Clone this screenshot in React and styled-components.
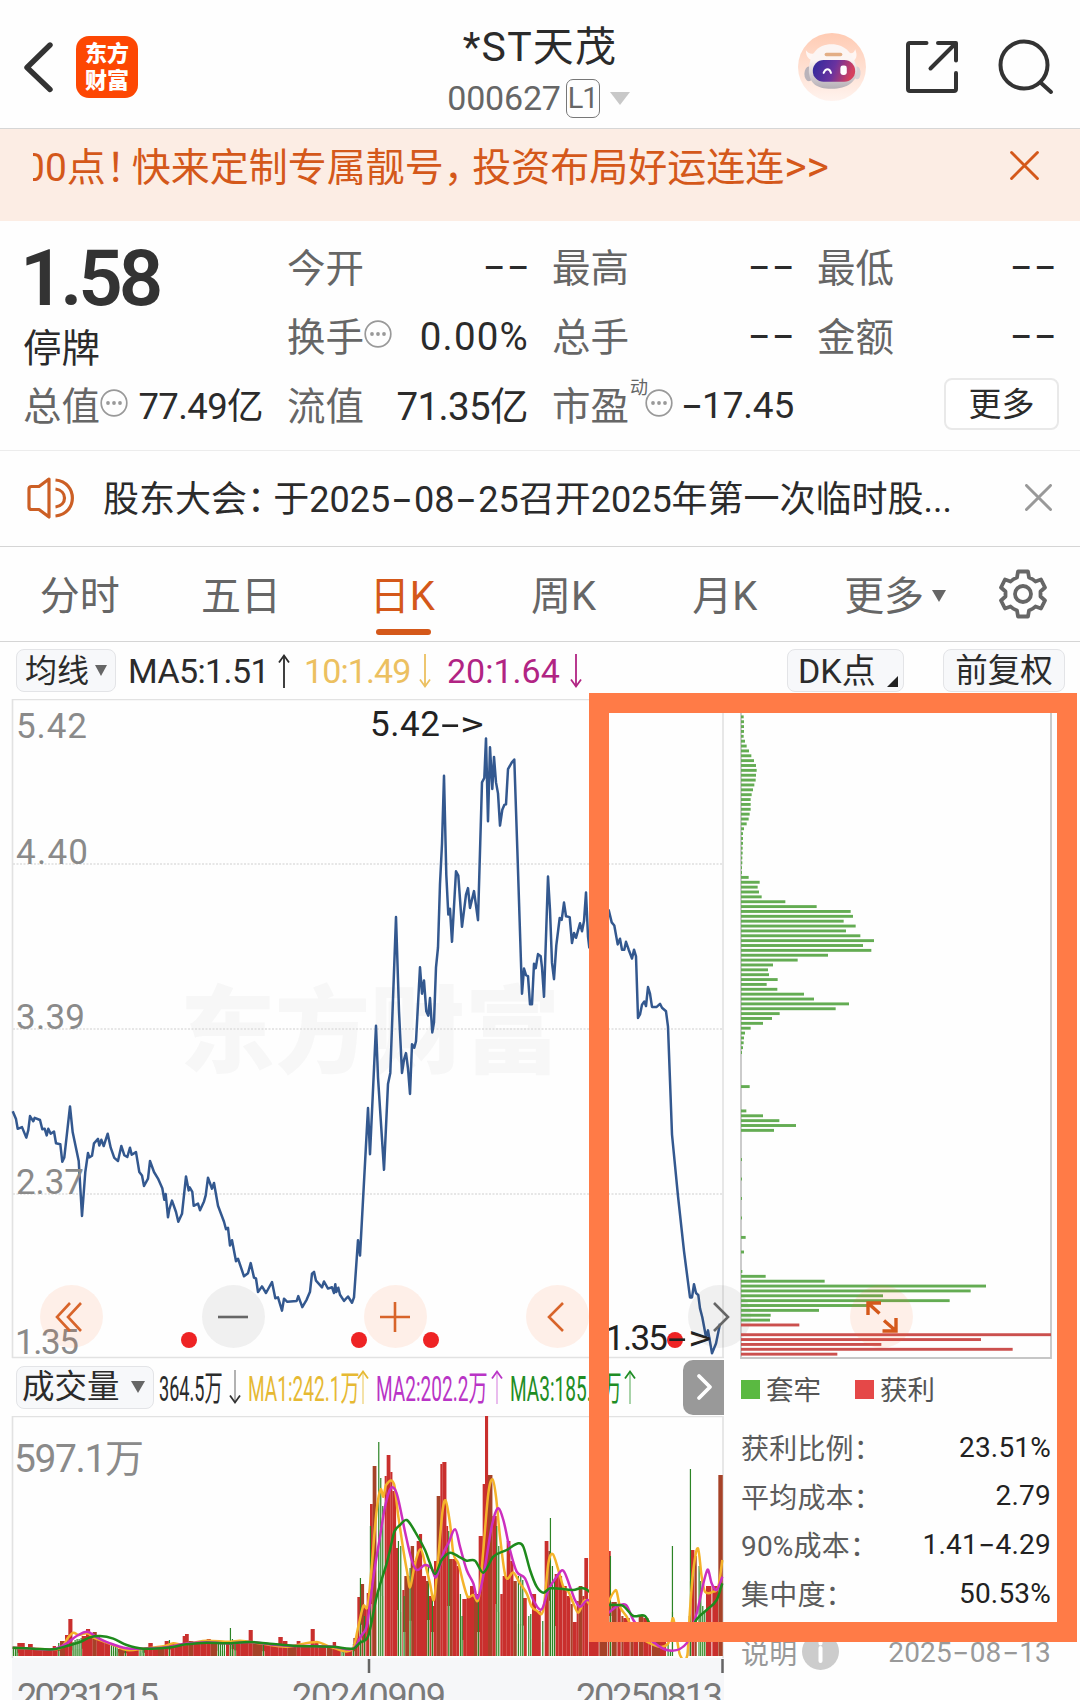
import React from 'react'
import styled, { createGlobalStyle, css } from 'styled-components'

const ORANGE = '#d4581a'
const GREY = '#666'
const DARK = '#2b2b2b'

const GlobalStyle = createGlobalStyle`
* {
    box-sizing: border-box;
}
body {
    margin : 0;
    background : #fff;
    font-family: Roboto, "Noto Sans CJK SC", sans-serif;
    color : ${DARK};
}
svg {
    display : block;
    flex : none;
}
`

const Page = styled.div`
position : relative;
width : 1080px;
height : 1700px;
overflow : hidden;
background : #fefefe;
white-space: nowrap;
`

/* ---------- header ---------- */

const Header = styled.header`
display : grid;
grid-template-columns: 1fr 200px 1fr;
height : 129px;
border-bottom: 1px solid #d6d6d6;
`

const HeaderLeft = styled.div`
display : flex;
align-items: center;
gap : 22px;
padding : 5px 0 0 23px;
`

const HeaderRight = styled.div`
display : flex;
align-items: center;
justify-content: flex-end;
gap : 39px;
padding : 5px 26px 0 0;
`

const Logo = styled.div`
display : flex;
flex-direction: column;
align-items: center;
justify-content: center;
width : 62px;
height : 62px;
border-radius: 13px;
background : #fd4703;
color : #fff;
font-size: 22px;
font-weight: 900;
line-height: 27px;
`

const Title = styled.div`
display : flex;
flex-direction: column;
align-items: center;
padding-top: 24px;
`

const StockName = styled.div`
height : 46px;
line-height: 46px;
font-size: 41px;
letter-spacing: 1.2px;
`

const StockCode = styled.div`
display : flex;
align-items: center;
height : 56px;
margin-left: -3px;
color : ${GREY};
font-size: 34px;
letter-spacing: -0.2px;
`

const LevelTag = styled.span`
width : 34px;
height : 39px;
margin : 0 10px 0 5px;
border : 1.5px solid #777;
border-radius: 7px;
text-align: center;
font-size: 29px;
line-height: 37px;
letter-spacing: -1px;
`

const Triangle = styled.i`
width : 0;
height : 0;
border-left: ${props => props.$w / 2}px solid transparent;
border-right: ${props => props.$w / 2}px solid transparent;
border-top: ${props => props.$h}px solid ${props => props.$color || GREY};
`

/* ---------- promo banner ---------- */

const Banner = styled.div`
display : flex;
justify-content: space-between;
height : 92px;
padding : 0 41px 0 33px;
background : #fcede4;
color : ${ORANGE};
`

const Marquee = styled.div`
display : flex;
justify-content: flex-end;
width : 796px;
height : 80px;
overflow : hidden;
font-size: 39px;
line-height: 79px;
`

const BannerClose = styled.div`
padding-top: 22px;
`

const Chevrons = styled.span`
font-size: 1.1em;
line-height: 1;
`

// full-width punctuation set tighter than one em
const Punct = styled.span`
letter-spacing: ${props => props.$ls || -0.27}em;
`

const Dash = styled.span`
display : inline-block;
width : ${props => props.$w || 0.63}em;
font-family: Inter;
text-align: center;
transform : scaleX(1.35);
`

/* ---------- quote ---------- */

const Quote = styled.section`
display : grid;
grid-template-columns: 239px 240px 240px 237px;
grid-template-rows: 69px 69px 69px;
column-gap: 25px;
height : 230px;
padding : 12px 0 0 24px;
border-bottom: 1px solid #ececec;
`

const PriceCell = styled.div`
grid-row: span 2;
`

const Price = styled.div`
height : 84px;
margin-left: -4px;
padding-top: 3px;
font-size: 78px;
font-weight: 600;
line-height: 86px;
letter-spacing: -4.2px;
color : #333;
`

const Status = styled.div`
margin-left: -1px;
font-size: 38.5px;
line-height: 64px;
`

const Cell = styled.div`
display : flex;
align-items: center;
height : 69px;
`

const Label = styled.span`
margin : -6px 0 0 -1px;
color : ${GREY};
font-size: 38.5px;
`

const Value = styled.span`
margin : ${props => props.$mt || 0}px ${props => props.$mr || 0}px 0 auto;
font-size: ${props => props.$size || 38.5}px;
letter-spacing: ${props => props.$ls || 0}px;
`

const Sup = styled.sup`
align-self: flex-start;
margin : 4px -3px 0 1px;
color : ${GREY};
font-size: 18px;
line-height: 26px;
`

const MoreButton = styled.button`
width : 115px;
height : 52px;
margin : -4px -4px 0 auto;
padding : 0;
border : 2px solid #e9e9e9;
border-radius: 8px;
background : #fff;
color : ${DARK};
font : 33px/49px Roboto, "Noto Sans CJK SC", sans-serif;
`

/* ---------- notice ---------- */

const Notice = styled.section`
display : flex;
align-items: center;
height : 96px;
padding : 0 28px 2px 27px;
border-bottom: 1px solid #d5d5d5;
`

const NoticeText = styled.div`
flex : 1;
margin : -3px 0 0 28px;
font-size: 36px;
`

/* ---------- tabs ---------- */

const Tabs = styled.nav`
display : flex;
height : 95px;
border-bottom: 1px solid #d5d5d5;
`

const Tab = styled.div`
display : flex;
flex-direction: column;
align-items: center;
width : 161.3px;
padding-top: 20px;
color : ${props => props.$active ? ORANGE : GREY};
font-size: 40px;
line-height: 60px;
text-indent: -2px;
${props => props.$active ? css`
&::after {
    content : '';
    width : 55px;
    height : 6px;
    margin-top: 2px;
    border-radius: 3px;
    background : ${ORANGE};
}
` : null}
`

const TabMore = styled.span`
display : flex;
align-items: center;
gap : 8px;
margin-left: 18px;

i {
    margin-top: -3px;
}
`

const Gear = styled.div`
margin-left: 31px;
padding-top: 22px;
`

/* ---------- indicator rows ---------- */

const Row = styled.div`
display : flex;
align-items: center;
height : ${props => props.$h}px;
padding-left: 16px;
`

const Chip = styled.div`
display : flex;
flex : none;
align-items: center;
justify-content: ${props => props.$center ? 'center' : 'space-between'};
width : ${props => props.$w}px;
height : 43px;
margin-left: ${props => props.$ml || 0}px;
padding : 0 8px 0 ${props => props.$pl || 8}px;
border : 1.5px solid #e3e4e7;
border-radius: 8px;
background : #f7f8fa;
font-size: ${props => props.$size || 32}px;
line-height: 38px;
`

const Corner = styled.i`
align-self: flex-end;
width : 0;
height : 0;
margin : 0 -3px 4px 0;
border-left: 11px solid transparent;
border-bottom: 11px solid #222;
`

const Average = styled.span`
display : flex;
align-items: center;
flex : none;
width : ${props => props.$w}px;
padding-left: ${props => props.$pl || 0}px;
color : ${props => props.$color};
font-size: 34px;
letter-spacing: ${props => props.$ls || 0}px;
`

const Squeezed = styled.span`
flex : none;
width : ${props => props.$w}px;
padding : 3px 0 0 ${props => props.$pl || 6}px;
color : ${props => props.$color};
font-size: 35.5px;
line-height: 44px;

span {
    display : inline-block;
    transform : scaleX(${props => props.$scale || 0.537});
    transform-origin: 0 50%;
}
`

/* ---------- chart area ---------- */

const Main = styled.main`
display : flex;
`

const Left = styled.div`
width : 724px;
`

const ChartBox = styled.div`
position : relative;
height : ${props => props.$h}px;
`

const Controls = styled.div`
position : absolute;
left : 40px;
bottom : 10px;
display : flex;
gap : 98.9px;
`

const Round = styled.div`
display : flex;
flex : none;
align-items: center;
justify-content: center;
width : 63px;
height : 63px;
border-radius: 50%;
background : ${props => props.$grey ? 'rgba(60, 60, 60, 0.07)' : 'rgba(255, 110, 40, 0.1)'};
`

const Expand = styled(Round)`
position : absolute;
left : 110px;
bottom : 11px;
`

const NextButton = styled.div`
display : flex;
align-items: center;
justify-content: center;
width : 41px;
height : 55px;
margin-left: auto;
border-radius: 10px 0 0 10px;
background : #999;
`

const Side = styled.aside`
width : 311px;
margin-left: 16px;
`

const Legend = styled.div`
display : flex;
align-items: center;
height : 58px;
padding : 0 0 0 1px;
color : #555;
font-size: 27.5px;
`

const Swatch = styled.i`
width : 19px;
height : 19px;
margin : 3px 6px 0 ${props => props.$ml || 0}px;
background : ${props => props.$color};
`

const Stat = styled.div`
display : flex;
align-items: center;
justify-content: space-between;
height : 48.6px;
padding-left: 1px;
color : ${props => props.$muted ? '#999' : '#222'};
font-size: 28px;
letter-spacing: 0.2px;
`

const StatName = styled.span`
display : flex;
align-items: center;
gap : 5px;
color : ${props => props.$muted ? '#999' : '#5c5c5c'};
`

const Stats = styled.div`
padding-top: 6px;

${Stat}:last-child {
    margin-top: 10px;
}
`

const Highlight = styled.div`
position : absolute;
left : 589px;
top : 693px;
width : 488px;
height : 949px;
border : 20px solid #ff7b47;
pointer-events: none;
`

/* ---------- data, in thirds of a pixel across ---------- */

const pricePoints = [
    38, 957, 48, 975, 53, 997, 66, 993, 79, 1017, 85, 1000, 90, 968, 100, 980, 104, 972, 120, 977, 127, 998, 134, 997,
    140, 1012, 145, 997, 152, 1008, 162, 1003, 168, 1030, 181, 1032, 187, 1072, 193, 1062, 210, 946, 218, 1005,
    236, 1070, 246, 1195, 256, 1095, 264, 1052, 268, 1062, 276, 1058, 282, 1030, 294, 1020, 298, 1035, 304, 1022,
    311, 1036, 323, 1008, 332, 1040, 343, 1063, 354, 1070, 364, 1036, 373, 1057, 382, 1061, 390, 1040, 395, 1056,
    408, 1050, 418, 1095, 426, 1103, 432, 1127, 444, 1110, 450, 1070, 462, 1095, 474, 1110, 487, 1132, 493, 1158,
    497, 1145, 504, 1198, 508, 1180, 516, 1160, 528, 1186, 535, 1208, 546, 1190, 558, 1105, 566, 1137, 569, 1130,
    577, 1140, 581, 1172, 594, 1167, 600, 1182, 612, 1162, 617, 1148, 624, 1108, 636, 1133, 642, 1120, 654, 1172,
    672, 1208, 678, 1225, 684, 1222, 690, 1262, 696, 1250, 708, 1298, 714, 1292, 732, 1332, 744, 1325, 752, 1302,
    762, 1335, 768, 1337, 774, 1368, 786, 1355, 798, 1370, 816, 1345, 826, 1382, 834, 1380, 846, 1410, 852, 1383,
    862, 1390, 890, 1388, 895, 1377, 907, 1402, 920, 1385, 930, 1367, 936, 1326, 942, 1322, 948, 1342, 966, 1357,
    972, 1344, 984, 1360, 996, 1357, 1002, 1370, 1006, 1350, 1009, 1368, 1015, 1358, 1020, 1374, 1032, 1388,
    1044, 1378, 1056, 1392, 1062, 1380, 1074, 1250, 1080, 1285, 1104, 950, 1110, 1055, 1128, 763, 1134, 880,
    1152, 1090, 1164, 895, 1171, 870, 1188, 516, 1197, 730, 1206, 870, 1212, 840, 1218, 825, 1224, 860, 1230, 918,
    1236, 805, 1243, 813, 1248, 798, 1260, 630, 1266, 690, 1272, 660, 1279, 730, 1285, 740, 1290, 700, 1297, 778,
    1302, 755, 1308, 630, 1314, 585, 1320, 440, 1326, 350, 1332, 195, 1339, 420, 1345, 510, 1350, 497, 1356, 572,
    1368, 412, 1375, 422, 1386, 538, 1398, 465, 1404, 450, 1410, 495, 1422, 457, 1434, 523, 1446, 210, 1453, 200,
    1458, 110, 1464, 298, 1470, 130, 1477, 225, 1482, 152, 1488, 210, 1494, 235, 1500, 308, 1507, 272, 1513, 261,
    1518, 260, 1524, 180, 1535, 165, 1543, 158, 1552, 360, 1566, 690, 1572, 633, 1578, 648, 1584, 650, 1590, 714,
    1596, 714, 1602, 622, 1607, 632, 1614, 600, 1622, 605, 1626, 630, 1632, 697, 1644, 424, 1650, 500, 1656, 620,
    1662, 657, 1669, 580, 1679, 518, 1685, 522, 1692, 483, 1698, 514, 1709, 516, 1716, 575, 1722, 552, 1728, 563,
    1740, 530, 1746, 548, 1752, 525, 1758, 460, 1764, 560, 1768, 585, 1790, 530, 1826, 500, 1835, 528, 1843, 535,
    1853, 578, 1860, 565, 1866, 590, 1873, 590, 1878, 572, 1886, 590, 1896, 610, 1902, 590, 1908, 605, 1914, 745,
    1920, 737, 1926, 715, 1933, 708, 1938, 718, 1944, 675, 1950, 690, 1956, 720, 1970, 720, 1980, 713, 1986, 722,
    1998, 730, 2004, 765, 2016, 1010, 2034, 1150, 2052, 1275, 2070, 1380, 2076, 1380, 2082, 1350, 2088, 1370,
    2095, 1375, 2100, 1405, 2107, 1425, 2118, 1470, 2124, 1455, 2136, 1507, 2148, 1485, 2160, 1440,
]

// start, end, height
const volumeBars = [
    52, 74, 13, 74, 84, 7, 84, 98, 12, 98, 128, 7, 128, 158, 7, 158, 168, 10, 168, 180, 9, 180, 195, 15, 195, 205, 21,
    205, 217, 37, 245, 258, 20, 258, 270, 27, 270, 278, 22, 278, 290, 24, 290, 300, 19, 300, 314, 16, 314, 330, 14,
    354, 376, 7, 378, 396, 7, 396, 416, 7, 432, 445, 8, 445, 458, 13, 458, 474, 7, 474, 494, 8, 494, 506, 15,
    506, 524, 13, 524, 548, 12, 548, 555, 20, 555, 566, 22, 566, 580, 15, 580, 602, 13, 602, 620, 13, 620, 632, 17,
    632, 652, 12, 678, 704, 12, 706, 722, 12, 722, 746, 13, 746, 758, 26, 758, 788, 13, 788, 812, 11, 812, 835, 11,
    835, 848, 19, 848, 862, 15, 862, 890, 10, 890, 901, 15, 901, 932, 10, 932, 944, 27, 944, 955, 14, 955, 978, 10,
    980, 998, 10, 998, 1008, 14, 1008, 1022, 8, 1034, 1058, 7, 1060, 1072, 18, 1072, 1082, 59, 1082, 1092, 72,
    1092, 1100, 50, 1100, 1108, 63, 1110, 1118, 152, 1118, 1129, 190, 1154, 1160, 180, 1160, 1171, 201,
    1171, 1177, 184, 1177, 1188, 165, 1188, 1195, 108, 1207, 1213, 66, 1213, 1228, 80, 1232, 1242, 110,
    1242, 1250, 95, 1250, 1257, 115, 1257, 1266, 122, 1266, 1278, 80, 1278, 1285, 75, 1285, 1296, 60, 1296, 1302, 50,
    1302, 1310, 95, 1310, 1321, 160, 1321, 1327, 192, 1327, 1339, 194, 1339, 1344, 130, 1347, 1358, 97,
    1358, 1370, 97, 1370, 1377, 90, 1387, 1400, 57, 1400, 1410, 60, 1410, 1422, 70, 1422, 1434, 62, 1436, 1448, 120,
    1448, 1455, 172, 1455, 1464, 240, 1464, 1477, 181, 1477, 1490, 140, 1501, 1508, 62, 1508, 1520, 80,
    1520, 1531, 115, 1531, 1540, 95, 1540, 1550, 75, 1569, 1580, 58, 1596, 1608, 62, 1608, 1622, 45, 1634, 1645, 115,
    1645, 1650, 105, 1664, 1675, 82, 1675, 1686, 80, 1687, 1700, 70, 1700, 1711, 60, 1712, 1718, 52, 1718, 1730, 34,
    1730, 1736, 55, 1736, 1747, 70, 1747, 1753, 60, 1753, 1764, 98, 1766, 1796, 55, 1798, 1822, 55, 1824, 1832, 105,
    1834, 1850, 54, 1852, 1862, 50, 1864, 1870, 40, 1870, 1889, 38, 1891, 1900, 28, 1900, 1914, 25, 1916, 1930, 40,
    1930, 1945, 38, 1945, 1953, 20, 1955, 1980, 18, 1980, 1998, 14, 2066, 2070, 40, 2071, 2083, 106, 2084, 2090, 100,
    2118, 2134, 70, 2137, 2154, 70, 2155, 2168, 181,
]
const brownBars = [7, 13, 17, 23, 29, 33, 38, 43, 49, 53, 55, 59, 66, 67, 72, 76, 80, 86, 90, 96, 101, 106, 109, 113, 115, 117, 119, 121, 124, 126, 128, 131, 133, 135]

const greenLines = [
    40, 9, 46, 9, 51, 8, 176, 13, 219, 14, 225, 16, 231, 17, 237, 17, 243, 18, 334, 12, 340, 12, 346, 11, 351, 9,
    376, 7, 420, 7, 426, 7, 431, 8, 508, 16, 655, 13, 661, 13, 667, 12, 673, 12, 691, 28, 697, 17, 705, 14, 790, 12,
    1026, 8, 1031, 8, 1060, 12, 1081, 78, 1093, 40, 1111, 130, 1136, 214, 1142, 178, 1148, 150, 1195, 115, 1202, 110, 1212, 60, 1230, 88,
    1285, 90, 1297, 60, 1346, 125, 1381, 62, 1386, 40, 1435, 60, 1490, 130, 1496, 110, 1555, 80, 1562, 80, 1568, 76, 1586, 40,
    1592, 42, 1628, 35, 1651, 138, 1657, 90, 1663, 75, 1831, 100, 2004, 16, 2011, 6, 2017, 110, 2071, 187, 2097, 90,
    2102, 75, 2108, 50, 2114, 45,
]

const maYellow = [
    38, 893, 100, 896, 160, 898, 185, 892, 205, 862, 220, 848, 235, 855, 262, 850, 280, 862, 300, 870, 340, 885, 380, 900,
    430, 896, 495, 888, 520, 880, 545, 884, 580, 878, 620, 872, 690, 875, 720, 872, 780, 880, 860, 890, 950, 876,
    990, 890, 1058, 898, 1075, 830, 1090, 768, 1103, 768, 1115, 650, 1130, 480, 1142, 418, 1150, 440, 1158, 405,
    1182, 402, 1195, 500, 1210, 600, 1222, 670, 1230, 712, 1245, 640, 1262, 598, 1275, 640, 1290, 700, 1302, 748,
    1315, 620, 1328, 480, 1337, 452, 1350, 520, 1360, 610, 1375, 640, 1390, 700, 1403, 740, 1420, 735, 1436, 745,
    1450, 600, 1465, 430, 1478, 388, 1488, 440, 1500, 560, 1517, 680, 1540, 668, 1560, 700, 1580, 730, 1595, 770,
    1610, 782, 1630, 780, 1645, 640, 1658, 612, 1675, 660, 1690, 710, 1705, 725, 1720, 760, 1735, 788, 1755, 750,
    1800, 800, 1847, 720, 1860, 770, 1880, 800, 1900, 840, 1950, 880, 2005, 880, 2018, 805, 2028, 850, 2040, 915,
    2062, 915, 2070, 780, 2080, 660, 2094, 595, 2105, 680, 2115, 725, 2140, 725, 2155, 710, 2167, 630,
]
const maPurple = [
    38, 893, 100, 896, 160, 898, 200, 880, 230, 858, 262, 845, 290, 862, 330, 880, 380, 895, 430, 896, 500, 892, 550, 882,
    620, 877, 680, 880, 750, 876, 820, 884, 880, 888, 940, 888, 1000, 890, 1060, 896, 1085, 855, 1100, 830, 1110, 760,
    1125, 650, 1140, 560, 1155, 470, 1172, 415, 1190, 430, 1215, 545, 1235, 630, 1250, 660, 1275, 645, 1295, 655,
    1308, 682, 1330, 610, 1345, 580, 1366, 538, 1380, 590, 1400, 660, 1420, 700, 1433, 745, 1455, 650, 1475, 530,
    1493, 475, 1510, 510, 1530, 600, 1550, 665, 1575, 685, 1600, 750, 1625, 778, 1645, 720, 1670, 680, 1690, 662,
    1710, 710, 1725, 750, 1740, 770, 1765, 750, 1800, 800, 1850, 770, 1878, 765, 1900, 810, 1930, 850, 2000, 900,
    2060, 880, 2090, 790, 2122, 660, 2135, 700, 2150, 720, 2167, 680,
]
const maGreen = [
    38, 893, 100, 896, 160, 898, 200, 888, 240, 876, 270, 862, 300, 858, 340, 866, 380, 885, 430, 896, 500, 893, 560, 883,
    620, 878, 680, 880, 750, 876, 820, 882, 880, 887, 940, 889, 1000, 890, 1060, 896, 1080, 878, 1105, 857, 1130, 740,
    1160, 640, 1170, 600, 1183, 545, 1200, 525, 1220, 510, 1245, 545, 1275, 600, 1290, 640, 1305, 672, 1325, 630,
    1350, 608, 1380, 622, 1400, 632, 1425, 632, 1450, 668, 1480, 620, 1520, 600, 1555, 580, 1570, 590, 1590, 660,
    1610, 710, 1630, 728, 1650, 715, 1720, 720, 1745, 714, 1765, 722, 1800, 760, 1850, 765, 1870, 768, 1900, 798,
    1935, 798, 1960, 840, 2020, 870, 2070, 850, 2090, 808, 2120, 780, 2150, 750, 2167, 700,
]

const zeros = n => Array(n).fill(0)
const chips = [
    8, 9, 9, 9, 8, 12, 17, 24, 31, 39, 45, 47, 45, 44, 40, 36, 32, 29, 29, 29, 26, 23, 17, 9, 6, 6, 6, 5, 5, 4, 4, 3, 3,
    23, 56, 50, 54, 62, 133, 227, 329, 336, 308, 344, 315, 358, 399, 366, 391, 261, 170, 96, 81, 84, 110, 77, 109, 189,
    219, 324, 284, 116, 93, 66, 29, 12, 9, 8, 6, 3, ...zeros(6), 26, ...zeros(4), 16, 66, 115, 165, 99, ...zeros(5), 3,
    ...zeros(3), 3, ...zeros(3), 3, ...zeros(3), 3, ...zeros(3), 14, 0, 0, 9, ...zeros(3), 4, 74, 251, 735, 689, 426,
    626, 380, 234, 89, 87, 175, 0, 930, 720, 421, 815, 289,
]
const FIRST_PROFIT = 125

const pairs = list => list.reduce((out, v, i) => (i % 2 ? out : [...out, [v, list[i + 1]]]), [])
const priceLine = pairs(pricePoints).map(([x, y]) => `${(x / 3).toFixed(1)},${(y / 2.272 - 9).toFixed(1)}`).join(' ')

// smooth curve through the moving-average points
const maLine = list => {
    const p = pairs(list).map(([x, y]) => [x / 3, (y - 198) / 3])
    let d = `M${p[0]}`
    for (let i = 0; i < p.length - 1; i++) {
        const a = p[i - 1] || p[i]
        const b = p[i]
        const c = p[i + 1]
        const e = p[i + 2] || c
        const k = (c[0] - b[0]) / 3
        const s1 = i > 0 ? (c[1] - a[1]) / (c[0] - a[0]) : 0
        const s2 = (e[1] - b[1]) / (e[0] - b[0])
        d += `C${b[0] + k} ${b[1] + s1 * k} ${c[0] - k} ${c[1] - s2 * k} ${c[0]} ${c[1]}`
    }
    return d
}

/* ---------- icons ---------- */

const Cross = ({ size, color, width }) => (
    <svg width={size} height={size} viewBox="0 0 28 28" fill="none" stroke={color} strokeWidth={width} strokeLinecap="round">
        <path d="M1.5 1.5 26.5 26.5M26.5 1.5 1.5 26.5" />
    </svg>
)

const DotsIcon = styled.svg`
margin-top: -6px;
`

const Dots = () => (
    <DotsIcon width="28" height="30" viewBox="0 0 28 30">
        <circle cx="14" cy="15" r="12.8" fill="none" stroke="#999" strokeWidth="1.7" />
        <g fill="#999"><circle cx="8" cy="15" r="1.9" /><circle cx="14" cy="15" r="1.9" /><circle cx="20" cy="15" r="1.9" /></g>
    </DotsIcon>
)

const ArrowIcon = styled.svg`
margin-left: ${props => props.$ml}px;
`

const Arrow = ({ down, color, shaft, ml }) => (
    <ArrowIcon $ml={ml} width="14" height="36" viewBox="0 0 14 36" fill="none" stroke={color} strokeWidth="1.8">
        <g transform={down ? 'rotate(180 7 18)' : undefined}>
            <path d="M7 3V35" stroke={shaft || color} />
            <path d="M2 9.5 7 2.5 12 9.5" />
        </g>
    </ArrowIcon>
)

const Robot = () => (
    <svg width="68" height="70" viewBox="0 0 69 70">
        <defs>
            <linearGradient id="halo" x1="0" y1="0" x2="0" y2="1">
                <stop offset="0" stopColor="#ffcbb3" /><stop offset="1" stopColor="#fff3ee" />
            </linearGradient>
            <linearGradient id="visor" x1="0" y1="0" x2="1" y2="0.2">
                <stop offset="0" stopColor="#2d2a9c" /><stop offset="0.55" stopColor="#69329f" /><stop offset="1" stopColor="#d5405e" />
            </linearGradient>
            <linearGradient id="shell" x1="0" y1="0" x2="0" y2="1">
                <stop offset="0.35" stopColor="#fcf5f3" /><stop offset="1" stopColor="#b5afb6" />
            </linearGradient>
        </defs>
        <circle cx="34.5" cy="35" r="34.5" fill="url(#halo)" />
        <path d="M8 18C8 25 12 29 17 28L20 20C14 23 10 21 8 18ZM58 17C61 24 59 28 54 30L50 20C54 22 57 21 58 17Z" fill="#fff6f3" />
        <ellipse cx="11" cy="42" rx="4.5" ry="7.5" fill="#b9b3ba" />
        <ellipse cx="60" cy="41" rx="3.5" ry="6.500" fill="#d9d2d6" />
        <path d="M11 40C11 22 20 12 34 12S57 22 60 38C60 50 50 57 34 57S12 51 11 40Z" fill="url(#shell)" />
        <rect x="27" y="20.5" width="18" height="3.5" rx="1.8" fill="#e3ae85" />
        <rect x="15" y="28" width="43" height="22" rx="11" fill="url(#visor)" />
        <path d="M26 41C28 36 32 36 33.5 41" fill="none" stroke="#fff" strokeWidth="2" strokeLinecap="round" />
        <rect x="43" y="33.5" width="6.5" height="9.500" rx="2.5" fill="#fff" />
    </svg>
)

const ShareIcon = () => (
    <svg width="54" height="54" viewBox="0 0 54 54" fill="none" stroke="#333" strokeWidth="4" strokeLinecap="round" strokeLinejoin="round">
        <path d="M21.5 3H5Q3 3 3 5V49Q3 51 5 51H49Q51 51 51 49V33" />
        <path d="M33 3H51V20.5M50 4 25.5 28.5" />
    </svg>
)

const SearchIcon = () => (
    <svg width="56" height="56" viewBox="0 0 56 56" fill="none" stroke="#333" strokeWidth="4" strokeLinecap="round">
        <circle cx="26" cy="26" r="23.5" />
        <path d="M42.5 43.500 53 53" />
    </svg>
)

const Speaker = () => (
    <svg width="48" height="42" viewBox="0 0 48 42" fill="none" stroke="#cc5f25" strokeWidth="3.2" strokeLinejoin="round">
        <path d="M12 9.5H4.5Q2 9.500 2 12V30Q2 32.5 4.5 32.5H12L22 40V2Z" />
        <path d="M28.5 3C51 5 51 37 28.5 39" />
        <path d="M28.5 12C40.5 13.5 40.5 28.5 28.5 30" />
    </svg>
)

const GearIcon = () => (
    <svg width="48" height="50" viewBox="0 0 48 50" fill="none" stroke={GREY} strokeWidth="3.8" strokeLinejoin="round">
        <path d="M19 2.5H29L30 8.5Q34 10 36.5 12.5L42 10.5L46 18.5L41.5 22.5V27.5L46 31.5L42 39.5L36.5 37.5Q34 40 30 41.5L29 47.5H19L18 41.5Q14 40 11.5 37.5L6 39.5L2 31.5L6.5 27.5V22.5L2 18.5L6 10.5L11.5 12.5Q14 10 18 8.5Z" />
        <circle cx="24" cy="25" r="8" />
    </svg>
)

const Stroke = ({ d, color, width = 2.6 }) => (
    <svg width="36" height="36" viewBox="0 0 36 36" fill="none" stroke={color} strokeWidth={width}>
        <path d={d} />
    </svg>
)

/* ---------- charts ---------- */

const PriceChart = () => (
    <svg width="724" height="660" viewBox="0 0 724 660" fontFamily="Roboto" fontSize="35">
        <text x="180" y="367" fontFamily="Noto Sans CJK SC" fontWeight="900" fontSize="95" fill="#f7f7f7">东方财富</text>
        <path d="M12.5 659V0.5H723V659" fill="none" stroke="#e2e2e2" strokeWidth="1.6" />
        <path d="M12 658.5H724" stroke="#e2e2e2" strokeWidth="1.6" />
        {[165, 330, 495].map(y => (
            <path key={y} d={`M13 ${y}H722`} stroke="#dedede" strokeWidth="1.3" strokeDasharray="2 1.5" />
        ))}
        <polyline points={priceLine} fill="none" stroke="#33588f" strokeWidth="2.5" strokeLinejoin="round" />
        <g fill="#8a8a8a">
            <text x="16" y="39" textLength="71">5.42</text>
            <text x="16" y="165" textLength="72">4.40</text>
            <text x="16" y="330" textLength="69">3.39</text>
            <text x="16" y="495" textLength="68">2.37</text>
            <text x="15" y="655" textLength="64">1.35</text>
        </g>
        {[189, 359, 431, 675].map(x => <circle key={x} cx={x} cy="641" r="8" fill="#ee2324" />)}
        <g fill="#222">
            <text x="370" y="37" textLength="70">5.42</text>
            <text x="605" y="651" textLength="63">1.35</text>
            <text transform="translate(441 37) scale(1.9 1)">-</text>
            <text transform="translate(460 37) scale(1.3 1)">&gt;</text>
            <text transform="translate(668 651) scale(1.9 1)">-</text>
            <text transform="translate(688 651) scale(1.3 1)">&gt;</text>
        </g>
    </svg>
)

const ChipChart = () => (
    <svg width="312" height="660" viewBox="0 0 312 660">
        <path d="M1 0V659H311V0" fill="none" stroke="#c6c6c6" strokeWidth="1.8" />
        {chips.map((w, i) => w > 0 && (
            <rect key={i} x="1" y={16.4 + i * 4.865} width={w / 3} height="2.9" fill={i < FIRST_PROFIT ? '#64ac53' : '#cb504e'} />
        ))}
    </svg>
)

const VolumeChart = () => {
    const bars = []
    for (let i = 0; i < volumeBars.length; i += 3) {
        bars.push(volumeBars.slice(i, i + 3))
    }
    return (
        <svg width="724" height="242" viewBox="0 0 724 242">
            <path d="M12.5 242V0.5H723V242" fill="none" stroke="#e2e2e2" strokeWidth="1.6" />
            {bars.map(([from, to, h], i) => (
                <rect key={i} x={from / 3} y={240 - h} width={(to - from) / 3 + 0.1} height={h} fill={brownBars.includes(i) ? '#a64228' : '#c92f2d'} />
            ))}
            {pairs(greenLines).map(([x, h]) => (
                <g key={x}>
                    <rect x={x / 3 - 1} y={240 - h * 0.4} width="2.2" height={h * 0.4} fill="#e9f3dc" />
                    <rect x={x / 3 - 0.5} y={240 - h} width="1.2" height={h} fill="#2c8425" />
                </g>
            ))}
            <g fill="none" strokeWidth="2.5" strokeLinejoin="round">
                <path d={maLine(maYellow)} stroke="#f4b32a" />
                <path d={maLine(maPurple)} stroke="#cc2fbf" />
                <path d={maLine(maGreen)} stroke="#1e8a1c" />
            </g>
            <text x="14" y="56" fontFamily="Roboto, Noto Sans CJK SC" fontSize="39" fill="#8a8a8a" textLength="130">597.1万</text>
        </svg>
    )
}

const DateAxis = () => (
    <svg width="724" height="42" viewBox="0 0 724 42" fontFamily="Roboto" fontSize="36" fill="#7a7a7a">
        <rect x="12" width="712" height="42" fill="#f6f7f9" />
        <path d="M369 1V15M722.5 1V15" stroke="#666" strokeWidth="2.5" />
        <text x="17" y="51" textLength="142">20231215</text>
        <text x="292" y="51" textLength="154">20240909</text>
        <text x="576" y="51" textLength="147">20250813</text>
    </svg>
)

const withDashes = (text, w) => text.split(/(-)/).map((part, i) => (part === '-' ? <Dash key={i} $w={w}>-</Dash> : part))

const quotes = [
    ['今开', '--'], ['最高', '--'], ['最低', '--'],
    ['换手', '0.00%', true], ['总手', '--'], ['金额', '--'],
]

const stats = [
    ['获利比例', '23.51%'],
    ['平均成本', '2.79'],
    ['90%成本', '1.41-4.29'],
    ['集中度', '50.53%'],
]

const App = () => {
    return (
        <>
            <GlobalStyle />
            <Page>
                <Header>
                    <HeaderLeft>
                        <svg width="31" height="52" viewBox="0 0 31 52" fill="none" stroke="#333" strokeWidth="5.4" strokeLinecap="round" strokeLinejoin="round">
                            <path d="M27 4 4 26.5 27 48.5" />
                        </svg>
                        <Logo><span>东方</span><span>财富</span></Logo>
                    </HeaderLeft>
                    <Title>
                        <StockName>*ST天茂</StockName>
                        <StockCode>
                            000627<LevelTag>L1</LevelTag><Triangle $w={20} $h={13} $color="#c8c8c8" />
                        </StockCode>
                    </Title>
                    <HeaderRight>
                        <Robot />
                        <ShareIcon />
                        <SearchIcon />
                    </HeaderRight>
                </Header>

                <Banner>
                    <Marquee>
                        <span>00点<Punct $ls={-0.34}>！</Punct>快来定制专属靓号<Punct>，</Punct>投资布局好运连连<Chevrons>&gt;&gt;</Chevrons></span>
                    </Marquee>
                    <BannerClose><Cross size={29} color={ORANGE} width={2.8} /></BannerClose>
                </Banner>

                <Quote>
                    <PriceCell>
                        <Price>1.58</Price>
                        <Status>停牌</Status>
                    </PriceCell>
                    {quotes.map(([name, value, info]) => (
                        <Cell key={name}>
                            <Label>{name}</Label>
                            {info ? <Dots /> : null}
                            <Value $ls={info ? 1.2 : 0} $mt={info ? 0 : -6} $mr={info ? -1 : -2}>{withDashes(value)}</Value>
                        </Cell>
                    ))}
                    <Cell><Label>总值</Label><Dots /><Value $size={36.5} $ls={-0.6} $mt={-5}>77.49亿</Value></Cell>
                    <Cell><Label>流值</Label><Value $ls={-0.6} $mt={-6}>71.35亿</Value></Cell>
                    <Cell><Label>市盈</Label><Sup>动</Sup><Dots /><Value $size={37} $ls={-0.2} $mt={-2} $mr={-1}>{withDashes('-17.45', 0.53)}</Value></Cell>
                    <Cell><MoreButton>更多</MoreButton></Cell>
                </Quote>

                <Notice>
                    <Speaker />
                    <NoticeText>
                        股东大会<Punct>：</Punct>于{withDashes('2025-08-25', 0.66)}召开2025年第一次临时股...
                    </NoticeText>
                    <Cross size={27} color="#999" width={3} />
                </Notice>

                <Tabs>
                    <Tab>分时</Tab>
                    <Tab>五日</Tab>
                    <Tab $active>日K</Tab>
                    <Tab>周K</Tab>
                    <Tab>月K</Tab>
                    <Tab><TabMore>更多<Triangle $w={14} $h={12} /></TabMore></Tab>
                    <Gear><GearIcon /></Gear>
                </Tabs>

                <Row $h={57}>
                    <Chip $w={100}>均线<Triangle $w={13} $h={11} /></Chip>
                    <Average $w={188} $pl={12} $ls={-0.6} $color={DARK}>MA5:1.51<Arrow color={DARK} ml={8} /></Average>
                    <Average $w={143} $ls={-0.9} $color="#ecc060">10:1.49<Arrow down color="#ecc060" ml={8} /></Average>
                    <Average $w={340} $color="#b12483">20:1.64<Arrow down color="#b12483" ml={9} /></Average>
                    <Chip $w={117} $pl={10} $size={34}>DK点<Corner /></Chip>
                    <Chip $w={122} $ml={39} $size={32.5} $center>前复权</Chip>
                </Row>

                <Main>
                    <Left>
                        <ChartBox $h={659}>
                            <PriceChart />
                            <Controls>
                                <Round><Stroke color="#d8642a" d="M16 4 3 18 16 32M27 4 14 18 27 32" /></Round>
                                <Round $grey><Stroke color="#666" d="M3 18H33" /></Round>
                                <Round><Stroke color="#d8642a" d="M3 18H33M18 3V33" /></Round>
                                <Round><Stroke color="#d8642a" d="M24 4 10 18 24 32" /></Round>
                                <Round $grey><Stroke color="#666" d="M13 4 27 18 13 32" /></Round>
                            </Controls>
                        </ChartBox>
                        <Row $h={58}>
                            <Chip $w={138} $pl={5} $size={32.5}>成交量<Triangle $w={14} $h={12} /></Chip>
                            <Squeezed $w={69} $pl={5} $scale={0.51} $color={DARK}><span>364.5万</span></Squeezed>
                            <Arrow down color="#333" shaft="#aaa" ml={5} />
                            <Squeezed $w={109} $color="#e6b933"><span>MA1:242.1万</span></Squeezed>
                            <Arrow color="#e6b933" shaft="#f3df9f" ml={5} />
                            <Squeezed $w={112} $color="#b934c6"><span>MA2:202.2万</span></Squeezed>
                            <Arrow color="#b934c6" shaft="#e7b5ec" ml={8} />
                            <Squeezed $w={112} $color="#1f8d25"><span>MA3:185.6万</span></Squeezed>
                            <Arrow color="#1f8d25" shaft="#9fcfa0" ml={7} />
                            <NextButton>
                                <svg width="18" height="28" viewBox="0 0 18 28" fill="none" stroke="#fff" strokeWidth="3.8" strokeLinecap="round" strokeLinejoin="round">
                                    <path d="M4 3 15 14 4 25" />
                                </svg>
                            </NextButton>
                        </Row>
                        <VolumeChart />
                        <DateAxis />
                    </Left>

                    <Side>
                        <ChartBox $h={660}>
                            <ChipChart />
                            <Expand>
                                <Stroke color={ORANGE} width={3.4} d="M4 16V4H17M4 4 15.5 14.5M32 19V32H18.5M32 32 20 21.5" />
                            </Expand>
                        </ChartBox>
                        <Legend>
                            <Swatch $color="#5ab941" />套牢
                            <Swatch $color="#e54848" $ml={34} />获利
                        </Legend>
                        <Stats>
                            {stats.map(([name, value]) => (
                                <Stat key={name}>
                                    <StatName>{name}：</StatName>
                                    <span>{withDashes(value)}</span>
                                </Stat>
                            ))}
                            <Stat $muted>
                                <StatName $muted>
                                    说明
                                    <svg width="37" height="37" viewBox="0 0 37 37">
                                        <circle cx="18.5" cy="18.5" r="18.5" fill="#ccc" />
                                        <path d="M18.5 8V10.5M18.5 15V28" stroke="#fff" strokeWidth="4" strokeLinecap="round" />
                                    </svg>
                                </StatName>
                                <span>{withDashes('2025-08-13')}</span>
                            </Stat>
                        </Stats>
                    </Side>
                </Main>
                <Highlight />
            </Page>
        </>
    )
}

export default App
